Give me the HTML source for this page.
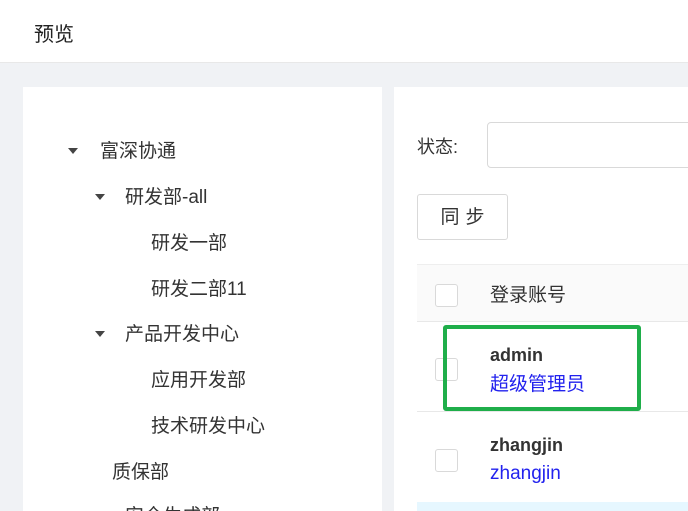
<!DOCTYPE html>
<html><head><meta charset="utf-8"><style>
*{margin:0;padding:0;box-sizing:border-box}
html,body{width:688px;height:511px;overflow:hidden}
body{background:#f0f2f5;font-family:"Liberation Sans","Noto Sans CJK SC",sans-serif;color:#333;position:relative}
.a{position:absolute;white-space:nowrap}
.t{font-size:19px;line-height:24px}
.tri{width:0;height:0;border-left:5px solid transparent;border-right:5px solid transparent;border-top:6px solid #444}
.cb{position:absolute;width:23px;height:23px;border:1px solid #d9d9d9;border-radius:3px;background:#fff}
</style></head><body>
<div class="a" style="left:0;top:0;width:688px;height:63px;background:#fff;border-bottom:1px solid #e8e8e8"></div>
<div class="a t" style="left:34px;top:23px;font-size:20px;color:#222">预览</div>
<div class="a" style="left:23px;top:87px;width:359px;height:424px;background:#fff"></div>
<div class="a" style="left:394px;top:87px;width:294px;height:424px;background:#fff"></div>
<div class="a tri" style="left:68px;top:148px"></div>
<div class="a t" style="left:100px;top:140px">富深协通</div>
<div class="a tri" style="left:95px;top:194px"></div>
<div class="a t" style="left:125px;top:186px">研发部-all</div>
<div class="a t" style="left:151px;top:232px">研发一部</div>
<div class="a t" style="left:151px;top:278px">研发二部11</div>
<div class="a tri" style="left:95px;top:331px"></div>
<div class="a t" style="left:125px;top:323px">产品开发中心</div>
<div class="a t" style="left:151px;top:369px">应用开发部</div>
<div class="a t" style="left:151px;top:415px">技术研发中心</div>
<div class="a t" style="left:112px;top:461px">质保部</div>
<div class="a t" style="left:125px;top:505px">安全生成部</div>
<div class="a t" style="left:417px;top:135px;font-size:18px">状态:</div>
<div class="a" style="left:487px;top:122px;width:220px;height:46px;border:1px solid #d9d9d9;border-radius:4px"></div>
<div class="a t" style="left:417px;top:194px;width:91px;height:46px;border:1px solid #d9d9d9;border-radius:3px;text-align:center;line-height:46px;letter-spacing:6px;padding-left:6px">同步</div>
<div class="a" style="left:417px;top:264px;width:280px;height:58px;background:#fafafa;border-top:1px solid #eee;border-bottom:1px solid #e8e8e8"></div>
<div class="cb" style="left:435px;top:284px"></div>
<div class="a t" style="left:490px;top:284px">登录账号</div>
<div class="a" style="left:417px;top:411px;width:280px;height:1px;background:#e8e8e8"></div>
<div class="cb" style="left:435px;top:358px"></div>
<div class="a t" style="left:490px;top:343px;font-weight:bold;color:#333;font-size:18px">admin</div>
<div class="a t" style="left:490px;top:373px;color:#2222ee">超级管理员</div>
<div class="a" style="left:443px;top:325px;width:198px;height:86px;border:4px solid #1fae4a;border-radius:3px"></div>
<div class="cb" style="left:435px;top:449px"></div>
<div class="a t" style="left:490px;top:433px;font-weight:bold;font-size:18px">zhangjin</div>
<div class="a t" style="left:490px;top:462px;color:#2222ee">zhangjin</div>
<div class="a" style="left:417px;top:502px;width:280px;height:10px;background:#e6f7ff"></div>
</body></html>
